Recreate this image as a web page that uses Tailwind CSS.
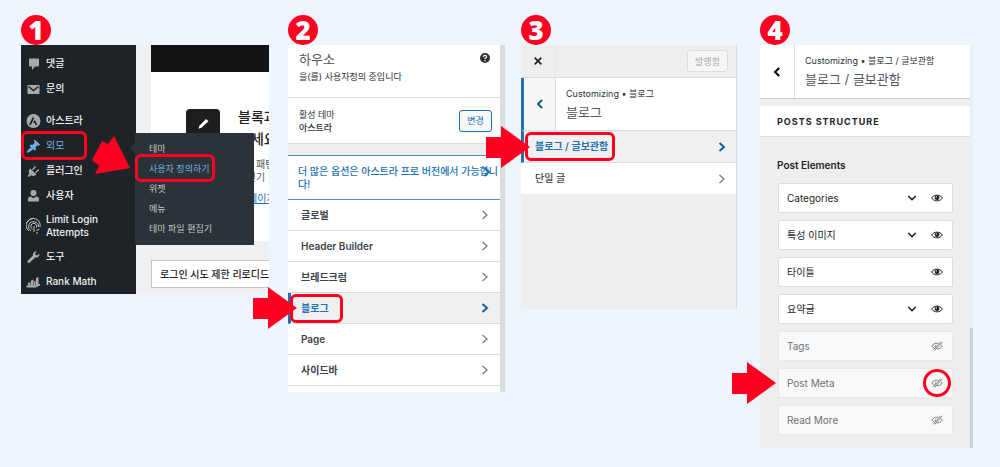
<!DOCTYPE html>
<html lang="ko">
<head>
  <meta charset="UTF-8" />
  <meta name="viewport" content="width=device-width, initial-scale=1.0" />
  <title>블로그 / 글보관함 설정</title>
  <script src="https://cdn.jsdelivr.net/npm/@tailwindcss/browser@4"></script>
</head>
<body class="min-h-screen overflow-x-hidden bg-[#eff5fd] font-['Inter','Noto_Sans_CJK_KR',sans-serif] text-[10px] leading-[13px] text-[#2c3338]">

  <!-- shared icons -->
  <svg class="hidden">
    <symbol id="arrow" viewBox="0 0 44 42"><path d="M0 11h15V0l29 21-29 21V32H0z" fill="#fe0020" /></symbol>
    <symbol id="chevron" viewBox="0 0 8 10"><path d="M1.500 1l4.500 4-4.500 4" fill="none" stroke="currentColor" stroke-width="1.300" /></symbol>
    <symbol id="chevron-bold" viewBox="0 0 8 10"><path d="M1.500 1l4.500 4-4.500 4" fill="none" stroke="currentColor" stroke-width="2" /></symbol>
    <symbol id="back" viewBox="0 0 8 10"><path d="M6.200 1L2 5l4.200 4" fill="none" stroke="currentColor" stroke-width="2" /></symbol>
    <symbol id="down" viewBox="0 0 10 6"><path d="M1.200 1L5 4.600 8.800 1" fill="none" stroke="currentColor" stroke-width="1.500" /></symbol>
    <symbol id="eye" viewBox="0 0 12 8">
      <path d="M.6 4C3 .2 9 .2 11.400 4 9 7.800 3 7.800.6 4z" fill="none" stroke="currentColor" />
      <circle cx="6" cy="3.700" r="2.400" fill="currentColor" />
      <circle cx="5.300" cy="2.900" r=".7" fill="#fff" />
    </symbol>
    <symbol id="eye-off" viewBox="0 0 12 10">
      <path d="M7 2.400C4.500 1.700 2 2.900.8 5c.6 1 1.500 1.800 2.500 2.200M9.600 3.200c.7.500 1.200 1.100 1.600 1.800C10 7.100 7.500 8.300 5.500 7.700M4.300 4.200c-.3 1 0 1.700.5 2.100M2 9.300L9.500.8M3.800 9.300L11.300.8" fill="none" stroke="currentColor" stroke-width=".9" />
    </symbol>
  </svg>

  <main class="grid grid-cols-[267fr_233fr_239fr_240fr] items-start pt-[15px] pl-[21px]">

    <!-- step 1: admin menu -->
    <section class="min-w-0 pr-[19px]">
      <h2 class="flex size-[30px] items-center justify-center rounded-full bg-[#fe0020] font-['Open_Sans'] text-[26px] leading-[30px] font-extrabold text-white">1</h2>
      <div class="flex h-[249px]">
        <nav class="relative z-10 w-[115px] shrink-0 bg-[#1d2327] pt-[6px] text-[#f0f0f1]">
          <a href="#" class="flex h-[25px] items-center gap-[5px] pl-[5px] font-medium">
            <svg class="h-4 w-[15px] text-[#a7aaad]" viewBox="0 0 15 16"><path d="M4 2.500h8q1 0 1 1v6q0 1-1 1H9L6 14v-3.500H4q-1 0-1-1v-6q0-1 1-1z" fill="currentColor" /></svg>댓글
          </a>
          <a href="#" class="flex h-[25px] items-center gap-[5px] pl-[5px] font-medium">
            <svg class="h-4 w-[15px]" viewBox="0 0 15 16"><path d="M1.500 4h12v9h-12z" fill="#a7aaad" /><path d="M2.500 5.500l5 4 5-4" fill="none" stroke="#1d2327" stroke-width="1.500" /></svg>문의
          </a>
          <a href="#" class="mt-[7px] flex h-[25px] items-center gap-[5px] pl-[5px] font-medium">
            <svg class="h-4 w-[15px]" viewBox="0 0 15 16"><circle cx="7.500" cy="8" r="7" fill="#a7aaad" /><path d="M7 3.500L3 12h1.900L8 5.600zM8.700 6.800L7 10h1.700l.8 2h2z" fill="#1d2327" /></svg>아스트라
          </a>
          <a href="#" class="relative flex h-[25px] items-center gap-[5px] pl-[5px] text-[#72aee6]">
            <svg class="h-4 w-[15px]" viewBox="0 0 15 16"><path d="M8.500 1.500l5.500 5-1.300 1.300-1.200-.5-2.100 2.300.6 1.800-1.300 1.100L3.500 7.700l1.200-1.200 1.800.5 2.200-2.200-.7-1.900zM5 9.200l2.300 2.100L3 14.300l-2.300.5L1.500 12.500z" fill="currentColor" /></svg>외모
            <span class="absolute -inset-y-[2px] left-0 w-[66px] rounded-md border-3 border-[#fe0020]"></span>
          </a>
          <a href="#" class="flex h-[25px] items-center gap-[5px] pl-[5px] font-medium">
            <svg class="h-4 w-[15px]" viewBox="0 0 15 16"><path d="M4.200 5.500l6.300 6c-1.800 1.700-4 1.800-5.400.8L2.600 14l-1.100-1.100 1.800-2.200c-1-1.500-.8-3.500.9-5.200zM6 6.300L9 3l1 .9-3 3.300zM9 9.200L12.300 6l1 1L10 10.100z" fill="#a7aaad" /></svg>플러그인
          </a>
          <a href="#" class="flex h-[25px] items-center gap-[5px] pl-[5px] font-medium">
            <svg class="h-4 w-[15px]" viewBox="0 0 15 16"><circle cx="7.500" cy="5" r="3" fill="#a7aaad" /><path d="M2 13.500V11q0-2.500 3-2.500l2.500 1.700L10 8.500q3 0 3 2.500v2.500z" fill="#a7aaad" /></svg>사용자
          </a>
          <a href="#" class="flex h-9 items-center gap-[5px] pl-[5px] font-medium">
            <svg class="h-[18px] w-[15px] shrink-0" viewBox="0 0 15 18"><path d="M3 14A7 7 0 1 1 14 10M1 5.500A8 8 0 0 1 7.500 1.200M5 14A5 5 0 1 1 12.500 10M6.500 12A3 3 0 1 1 10.500 10.500M8 9v6M10.500 13.500l3-1.500M10 16h2" fill="none" stroke="#c3c6c9" stroke-width="1" /></svg>
            <span>Limit Login Attempts</span>
          </a>
          <a href="#" class="flex h-[25px] items-center gap-[5px] pl-[5px] font-medium">
            <svg class="h-4 w-[15px]" viewBox="0 0 15 16"><path d="M13.300 4.800c.4 2.600-1.600 4.300-4.100 3.700l-5.600 5.200q-1 .7-1.800-.1t0-1.800L7 6.200C6.700 3.700 8.400 2 10.800 2.300L9.200 4.200l.3 1.800 1.900.3z" fill="#a7aaad" /></svg>도구
          </a>
          <a href="#" class="flex h-[25px] items-center gap-[5px] pl-[5px] font-medium">
            <svg class="h-4 w-[15px]" viewBox="0 0 15 16"><path d="M2 9l2.500-1v4H2zM5 6.500l2.500-1V12H5zM8 7.500l1.500-1V12H8zM10 4l2.500-1v8H10z" fill="#a7aaad" /><path d="M.5 12.500h9l4.500-2" fill="none" stroke="#a7aaad" stroke-width="1.800" /></svg>Rank Math
          </a>

          <!-- fly-out of the appearance item -->
          <div class="absolute top-[88px] left-[114px] w-[119px] bg-[#2c3338] pt-[5px] pb-[7px] text-[9px] text-[#c3c4c7]">
            <svg class="absolute top-[9px] -left-[5px] h-[12px] w-[6px]" viewBox="0 0 6 12"><path d="M6 0v12L0 6z" fill="#2c3338" /></svg>
            <a href="#" class="flex h-5 items-center pl-[14px]">테마</a>
            <a href="#" class="relative flex h-5 items-center border-l-3 border-[#72aee6] pl-[11px] text-[#72aee6]">사용자 정의하기
              <span class="absolute -inset-y-1 -left-[3px] w-20 rounded-md border-3 border-[#fe0020]"></span>
            </a>
            <a href="#" class="flex h-5 items-center pl-[14px]">위젯</a>
            <a href="#" class="flex h-5 items-center pl-[14px]">메뉴</a>
            <a href="#" class="flex h-5 items-center pl-[14px]">테마 파일 편집기</a>
          </div>
          <svg class="absolute top-[91px] left-[71px] h-[39px] w-[39px]" viewBox="0 0 39 39"><path d="M22 0l16 32-35 6 4-8-7-6 10-19 6 3z" fill="#fe0020" /></svg>
        </nav>

        <div class="min-w-0 flex-1 overflow-hidden bg-[#f0f0f1] pl-[15px]">
          <div class="h-[27px] bg-[#131416]"></div>
          <div class="flex h-[169px] items-start gap-[18px] overflow-hidden bg-white pt-[37px] pl-[35px] whitespace-nowrap">
            <div class="flex size-[34px] shrink-0 items-center justify-center rounded-sm bg-[#1e1e1e] pb-1">
              <svg class="size-4" viewBox="0 0 16 16"><path d="M11 3l2.500 2.300-7 6.500-3 .900.900-3z" fill="#fff" /></svg>
            </div>
            <div>
              <p class="-mt-[3px] text-sm leading-[22px] font-medium text-[#1e1e1e]">블록과<br />쓰세요</p>
              <p class="mt-2 pl-[6px] text-[#50575e]">럭 패턴<br />&nbsp;걷기</p>
              <a href="#" class="mt-2 block pl-[10px] text-[#2271b1] underline">페이지</a>
            </div>
          </div>
          <div class="mt-[19px] flex h-7 items-center border border-r-0 border-[#c3c4c7] bg-white pl-2 font-medium whitespace-nowrap text-[#1d2327]">로그인 시도 제한 리로디드</div>
        </div>
      </div>
    </section>

    <!-- step 2: customizer root -->
    <section class="min-w-0 pr-4">
      <h2 class="flex size-[30px] items-center justify-center rounded-full bg-[#fe0020] font-['Open_Sans'] text-[26px] leading-[30px] font-extrabold text-white">2</h2>
      <div class="border-r-5 border-[#dcdcde] bg-white">
        <div class="flex h-[53px] justify-between border-b border-[#dcdcde] pt-1 pr-[10px] pl-[11px]">
          <div>
            <h3 class="text-[13px] leading-5 text-[#50575e]">하우소</h3>
            <p class="text-[9px] leading-4">을(를) 사용자정의 중입니다</p>
          </div>
          <svg class="mt-1 size-[10px]" viewBox="0 0 10 10"><circle cx="5" cy="5" r="5" fill="#2c3338" /><path d="M3.400 4q0-1.600 1.600-1.600T6.600 3.900Q6.600 4.700 5 5.400V6M5 7v1.200" fill="none" stroke="#fff" stroke-width="1.200" /></svg>
        </div>
        <div class="flex h-[45px] items-center justify-between pr-2 pl-[11px]">
          <p class="text-[9px]">활성 테마<br /><strong class="font-medium">아스트라</strong></p>
          <button class="h-[22px] w-[33px] rounded-[3px] border border-[#2271b1] bg-[#f6f7f7] text-[9px] text-[#2271b1]">변경</button>
        </div>
        <div class="h-3 border-t border-[#dcdcde] bg-[#eee]"></div>
        <a href="#" class="relative block h-[45px] border-y border-y-[#4f8fc4] pt-[9px] pl-[10px] font-medium break-all text-[#2271b1]">더 많은 옵션은 아스트라 프로 버전에서 가능합니다!
          <svg class="absolute top-[11px] right-[9px] h-[10px] w-2"><use href="#chevron-bold" /></svg>
        </a>
        <nav class="pb-[6px] font-semibold text-[#3c434a]">
          <a href="#" class="flex h-[31px] items-center justify-between border-b border-[#dcdcde] pr-[11px] pl-[13px]">글로벌<svg class="h-[10px] w-2 text-[#787c82]"><use href="#chevron" /></svg></a>
          <a href="#" class="flex h-[31px] items-center justify-between border-b border-[#dcdcde] pr-[11px] pl-[13px]">Header Builder<svg class="h-[10px] w-2 text-[#787c82]"><use href="#chevron" /></svg></a>
          <a href="#" class="flex h-[31px] items-center justify-between border-b border-[#dcdcde] pr-[11px] pl-[13px]">브레드크럼<svg class="h-[10px] w-2 text-[#787c82]"><use href="#chevron" /></svg></a>
          <a href="#" class="relative flex h-[31px] items-center justify-between border-b border-l-3 border-b-[#dcdcde] border-l-[#2271b1] bg-[#f0f0f1] pr-[11px] pl-[10px] text-[#2271b1]">블로그<svg class="h-[10px] w-2 text-[#135e96]"><use href="#chevron-bold" /></svg>
            <span class="absolute top-[1px] -left-[1px] h-[29px] w-[53px] rounded-md border-3 border-[#fe0020]"></span>
            <svg class="absolute -top-[6px] -left-[38px] h-[42px] w-11"><use href="#arrow" /></svg>
          </a>
          <a href="#" class="flex h-[31px] items-center justify-between border-b border-[#dcdcde] pr-[11px] pl-[13px]">Page<svg class="h-[10px] w-2 text-[#787c82]"><use href="#chevron" /></svg></a>
          <a href="#" class="flex h-[31px] items-center justify-between border-b border-[#dcdcde] pr-[11px] pl-[13px]">사이드바<svg class="h-[10px] w-2 text-[#787c82]"><use href="#chevron" /></svg></a>
        </nav>
      </div>
    </section>

    <!-- step 3: blog section -->
    <section class="min-w-0 pr-[23px]">
      <h2 class="flex size-[30px] items-center justify-center rounded-full bg-[#fe0020] font-['Open_Sans'] text-[26px] leading-[30px] font-extrabold text-white">3</h2>
      <div class="border-r border-[#dcdcde] bg-[#eee] pb-[115px]">
        <div class="flex h-[33px] items-center justify-between border-b border-[#dcdcde] pr-2">
          <button class="flex h-full w-[35px] items-center justify-center border-r border-[#e6e6e6]" aria-label="닫기">
            <svg class="size-2" viewBox="0 0 8 8"><path d="M.7.700l6.600 6.600M7.300.700L.7 7.300" stroke="#1d2327" stroke-width="1.700" /></svg>
          </button>
          <button class="h-[22px] w-[41px] rounded-[3px] border border-[#dcdcde] bg-[#f6f7f7] text-[9px] text-[#a7aaad]" disabled>발행함</button>
        </div>
        <div class="flex h-[53px] border-b border-l-3 border-b-[#dcdcde] border-l-[#2271b1] bg-white">
          <button class="flex w-8 items-center justify-center border-r border-[#dcdcde] bg-[#f6f7f7] text-[#135e96]" aria-label="뒤로"><svg class="h-[10px] w-2"><use href="#back" /></svg></button>
          <div class="pt-2 pl-[10px]">
            <p class="text-[9px] leading-4">Customizing • 블로그</p>
            <h3 class="text-[13px] leading-5 text-[#50575e]">블로그</h3>
          </div>
        </div>
        <a href="#" class="relative flex h-8 items-center justify-between border-b border-l-3 border-b-[#dcdcde] border-l-[#2271b1] bg-[#f0f0f1] pr-[10px] pl-[11px] font-semibold text-[#2271b1]">블로그 / 글보관함<svg class="h-[10px] w-2 text-[#135e96]"><use href="#chevron-bold" /></svg>
          <span class="absolute top-[1px] left-[1px] h-[29px] w-[90px] rounded-md border-3 border-[#fe0020]"></span>
          <svg class="absolute -top-[5px] -left-[38px] h-[42px] w-11"><use href="#arrow" /></svg>
        </a>
        <a href="#" class="flex h-[31px] items-center justify-between bg-white pr-[10px] pl-[14px] font-medium text-[#3c434a]">단일 글<svg class="h-[10px] w-2 text-[#787c82]"><use href="#chevron" /></svg></a>
      </div>
    </section>

    <!-- step 4: archive options -->
    <section class="min-w-0 pr-[27px]">
      <h2 class="flex size-[30px] items-center justify-center rounded-full bg-[#fe0020] font-['Open_Sans'] text-[26px] leading-[30px] font-extrabold text-white">4</h2>
      <div class="relative bg-[#eee] pb-[13px]">
        <div class="mr-[3px] flex h-[54px] border-b border-[#ccd0d4] bg-white">
          <button class="flex w-[35px] items-center justify-center border-r border-[#dcdcde] text-black" aria-label="뒤로"><svg class="h-[10px] w-2"><use href="#back" /></svg></button>
          <div class="pt-2 pl-[10px]">
            <p class="text-[9px] leading-4">Customizing • 블로그 / 글보관함</p>
            <h3 class="text-[13px] leading-5 text-[#50575e]">블로그 / 글보관함</h3>
          </div>
        </div>
        <h4 class="mt-[7px] mr-[3px] flex h-[31px] items-center border-b border-[#dcdcde] bg-white pl-[17px] text-[9px] font-bold tracking-[1px] text-[#1d2327]">POSTS STRUCTURE</h4>
        <h4 class="mt-[22px] pl-[17px] font-semibold text-[#1d2327]">Post Elements</h4>
        <ul class="mt-[11px] mr-[20px] ml-[18px] flex flex-col gap-[7px]">
          <li class="flex h-[30px] items-center gap-[14px] rounded-[2px] border border-[#dcdcde] bg-white pr-[9px] pl-2 text-[#1d2327]"><span class="flex-1">Categories</span><svg class="h-[6px] w-[10px]"><use href="#down" /></svg><svg class="h-2 w-3"><use href="#eye" /></svg></li>
          <li class="flex h-[30px] items-center gap-[14px] rounded-[2px] border border-[#dcdcde] bg-white pr-[9px] pl-2 text-[#1d2327]"><span class="flex-1">특성 이미지</span><svg class="h-[6px] w-[10px]"><use href="#down" /></svg><svg class="h-2 w-3"><use href="#eye" /></svg></li>
          <li class="flex h-[30px] items-center gap-[14px] rounded-[2px] border border-[#dcdcde] bg-white pr-[9px] pl-2 text-[#1d2327]"><span class="flex-1">타이틀</span><svg class="h-2 w-3"><use href="#eye" /></svg></li>
          <li class="flex h-[30px] items-center gap-[14px] rounded-[2px] border border-[#dcdcde] bg-white pr-[9px] pl-2 text-[#1d2327]"><span class="flex-1">요약글</span><svg class="h-[6px] w-[10px]"><use href="#down" /></svg><svg class="h-2 w-3"><use href="#eye" /></svg></li>
          <li class="flex h-[30px] items-center rounded-[2px] border border-[#e8e8e8] bg-[#f9f9f9] pr-[9px] pl-2 text-[#6c737a]"><span class="flex-1">Tags</span><svg class="h-[10px] w-3"><use href="#eye-off" /></svg></li>
          <li class="relative flex h-[30px] items-center rounded-[2px] border border-[#e8e8e8] bg-[#f9f9f9] pr-[9px] pl-2 text-[#6c737a]"><span class="flex-1">Post Meta</span><svg class="h-[10px] w-3"><use href="#eye-off" /></svg>
            <span class="absolute right-[1px] size-7 rounded-full border-3 border-[#fe0020]"></span>
            <svg class="absolute -top-[7px] -left-[47px] h-[42px] w-11"><use href="#arrow" /></svg>
          </li>
          <li class="flex h-[30px] items-center rounded-[2px] border border-[#e8e8e8] bg-[#f9f9f9] pr-[9px] pl-2 text-[#6c737a]"><span class="flex-1">Read More</span><svg class="h-[10px] w-3"><use href="#eye-off" /></svg></li>
        </ul>
        <div class="absolute right-0 bottom-0 h-[120px] w-[3px] bg-[#ccd1d5]"></div>
      </div>
    </section>
  </main>
</body>
</html>
